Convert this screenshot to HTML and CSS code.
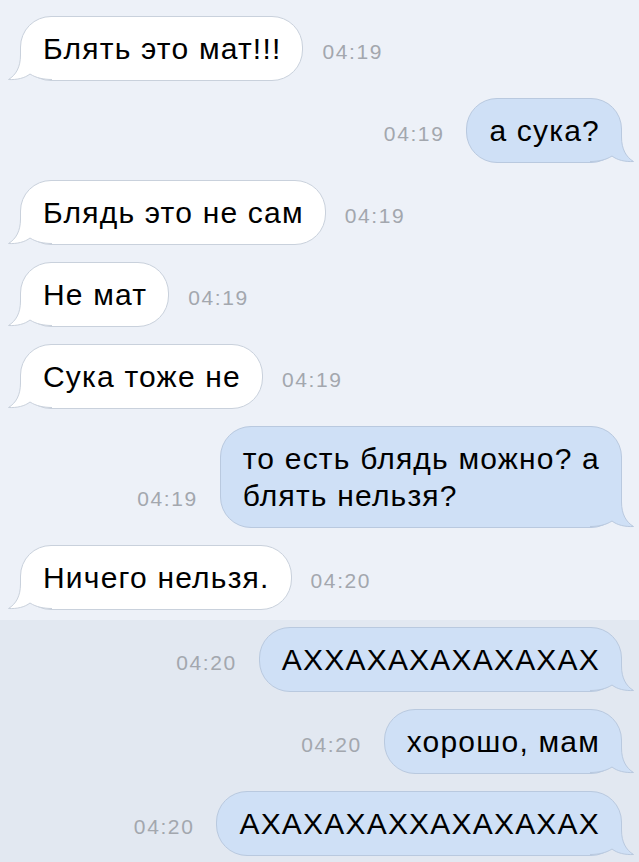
FILE: index.html
```html
<!DOCTYPE html>
<html lang="ru">
<head>
<meta charset="utf-8">
<title>Чат</title>
<link rel="stylesheet" href="styles.css">
</head>
<body>
<div class="chat">
  <section class="group">
    <div class="row in">
      <div class="bubble"><svg class="tail" viewBox="0 0 44 34"><path class="tf" d="M12.5 0 L12.5 8 C12.5 20 8 28 0.5 32.5 C9 33 17 31 22 27 C28 31 36 32.5 44 32.5 L44 0 Z"/><path class="ts" d="M12.5 0 L12.5 8 C12.5 20 8 28 0.5 32.5 C9 33 17 31 22 27 C28 31 36 32.5 44 32.5"/></svg><span class="txt">Блять это мат!!!</span></div>
      <span class="time">04:19</span>
    </div>
    <div class="row out">
      <span class="time">04:19</span>
      <div class="bubble"><svg class="tail" viewBox="0 0 44 34"><path class="tf" d="M12.5 0 L12.5 8 C12.5 20 8 28 0.5 32.5 C9 33 17 31 22 27 C28 31 36 32.5 44 32.5 L44 0 Z"/><path class="ts" d="M12.5 0 L12.5 8 C12.5 20 8 28 0.5 32.5 C9 33 17 31 22 27 C28 31 36 32.5 44 32.5"/></svg><span class="txt">а сука?</span></div>
    </div>
    <div class="row in">
      <div class="bubble"><svg class="tail" viewBox="0 0 44 34"><path class="tf" d="M12.5 0 L12.5 8 C12.5 20 8 28 0.5 32.5 C9 33 17 31 22 27 C28 31 36 32.5 44 32.5 L44 0 Z"/><path class="ts" d="M12.5 0 L12.5 8 C12.5 20 8 28 0.5 32.5 C9 33 17 31 22 27 C28 31 36 32.5 44 32.5"/></svg><span class="txt">Блядь это не сам</span></div>
      <span class="time">04:19</span>
    </div>
    <div class="row in">
      <div class="bubble"><svg class="tail" viewBox="0 0 44 34"><path class="tf" d="M12.5 0 L12.5 8 C12.5 20 8 28 0.5 32.5 C9 33 17 31 22 27 C28 31 36 32.5 44 32.5 L44 0 Z"/><path class="ts" d="M12.5 0 L12.5 8 C12.5 20 8 28 0.5 32.5 C9 33 17 31 22 27 C28 31 36 32.5 44 32.5"/></svg><span class="txt">Не мат</span></div>
      <span class="time">04:19</span>
    </div>
    <div class="row in">
      <div class="bubble"><svg class="tail" viewBox="0 0 44 34"><path class="tf" d="M12.5 0 L12.5 8 C12.5 20 8 28 0.5 32.5 C9 33 17 31 22 27 C28 31 36 32.5 44 32.5 L44 0 Z"/><path class="ts" d="M12.5 0 L12.5 8 C12.5 20 8 28 0.5 32.5 C9 33 17 31 22 27 C28 31 36 32.5 44 32.5"/></svg><span class="txt">Сука тоже не</span></div>
      <span class="time">04:19</span>
    </div>
    <div class="row out">
      <span class="time">04:19</span>
      <div class="bubble"><svg class="tail" viewBox="0 0 44 34"><path class="tf" d="M12.5 0 L12.5 8 C12.5 20 8 28 0.5 32.5 C9 33 17 31 22 27 C28 31 36 32.5 44 32.5 L44 0 Z"/><path class="ts" d="M12.5 0 L12.5 8 C12.5 20 8 28 0.5 32.5 C9 33 17 31 22 27 C28 31 36 32.5 44 32.5"/></svg><span class="txt">то есть блядь можно? а<br>блять нельзя?</span></div>
    </div>
    <div class="row in">
      <div class="bubble"><svg class="tail" viewBox="0 0 44 34"><path class="tf" d="M12.5 0 L12.5 8 C12.5 20 8 28 0.5 32.5 C9 33 17 31 22 27 C28 31 36 32.5 44 32.5 L44 0 Z"/><path class="ts" d="M12.5 0 L12.5 8 C12.5 20 8 28 0.5 32.5 C9 33 17 31 22 27 C28 31 36 32.5 44 32.5"/></svg><span class="txt">Ничего нельзя.</span></div>
      <span class="time">04:20</span>
    </div>
  </section>
  <section class="group unread">
    <div class="row out">
      <span class="time">04:20</span>
      <div class="bubble"><svg class="tail" viewBox="0 0 44 34"><path class="tf" d="M12.5 0 L12.5 8 C12.5 20 8 28 0.5 32.5 C9 33 17 31 22 27 C28 31 36 32.5 44 32.5 L44 0 Z"/><path class="ts" d="M12.5 0 L12.5 8 C12.5 20 8 28 0.5 32.5 C9 33 17 31 22 27 C28 31 36 32.5 44 32.5"/></svg><span class="txt">АХХАХАХАХАХАХАХ</span></div>
    </div>
    <div class="row out">
      <span class="time">04:20</span>
      <div class="bubble"><svg class="tail" viewBox="0 0 44 34"><path class="tf" d="M12.5 0 L12.5 8 C12.5 20 8 28 0.5 32.5 C9 33 17 31 22 27 C28 31 36 32.5 44 32.5 L44 0 Z"/><path class="ts" d="M12.5 0 L12.5 8 C12.5 20 8 28 0.5 32.5 C9 33 17 31 22 27 C28 31 36 32.5 44 32.5"/></svg><span class="txt">хорошо, мам</span></div>
    </div>
    <div class="row out">
      <span class="time">04:20</span>
      <div class="bubble"><svg class="tail" viewBox="0 0 44 34"><path class="tf" d="M12.5 0 L12.5 8 C12.5 20 8 28 0.5 32.5 C9 33 17 31 22 27 C28 31 36 32.5 44 32.5 L44 0 Z"/><path class="ts" d="M12.5 0 L12.5 8 C12.5 20 8 28 0.5 32.5 C9 33 17 31 22 27 C28 31 36 32.5 44 32.5"/></svg><span class="txt">АХАХАХАХХАХАХАХАХ</span></div>
    </div>
  </section>
</div>
</body>
</html>
```

FILE: styles.css
```css
html, body {
  margin: 0;
  padding: 0;
}
body {
  background: #e2e8f1;
  font-family: "Liberation Sans", Arial, sans-serif;
  color: #000;
}
.chat {
  display: flex;
  flex-direction: column;
  min-height: 862px;
}
.group {
  display: flex;
  flex-direction: column;
  gap: 17px;
  background: #edf1f8;
  padding: 16px 17px 10px 20px;
}
.group.unread {
  background: #e2e8f1;
  padding-top: 7px;
  flex: 1;
}
.row {
  display: flex;
  align-items: last baseline;
}
.row.out {
  justify-content: flex-end;
}
.bubble {
  position: relative;
  font-size: 30px;
  letter-spacing: 1.2px;
  line-height: 37px;
  padding: 13px 21px 13px 22px;
  border-radius: 31px;
  border: 1px solid #c9d1dc;
  background: #fff;
  white-space: nowrap;
}
.txt {
  position: relative;
}
.row.out .bubble {
  background: #cfe0f6;
  border-color: #b9c9df;
}
.tail {
  position: absolute;
  bottom: -1px;
  left: -13px;
  width: 44px;
  height: 34px;
  overflow: visible;
}
.row.out .tail {
  left: auto;
  right: -13px;
  transform: scaleX(-1);
}
.tf {
  fill: #fff;
}
.ts {
  fill: none;
  stroke: #c9d1dc;
  stroke-width: 1;
}
.row.out .tf {
  fill: #cfe0f6;
}
.row.out .ts {
  stroke: #b9c9df;
}
.time {
  font-size: 21px;
  letter-spacing: 1.6px;
  color: #a3a7ae;
}
.row.in .time {
  margin-left: 19px;
}
.row.out .time {
  margin-right: 22px;
}
```
